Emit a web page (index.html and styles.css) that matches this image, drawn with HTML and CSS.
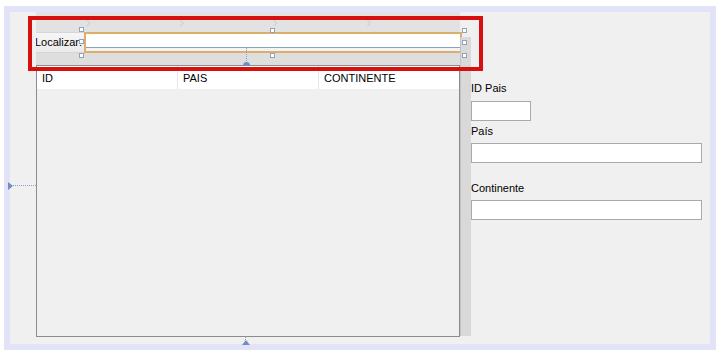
FILE: index.html
```html
<!DOCTYPE html>
<html lang="pt">
<head>
  <meta charset="UTF-8">
  <title>Países</title>
  <link rel="stylesheet" href="styles.css">
</head>
<body>
  <div class="frame">
    <div class="designer">
      <div class="panel">
        <div class="toolbar">
          <span class="chev">&#8250;</span>
          <span class="chev">&#8250;</span>
          <span class="chev">&#8250;</span>
          <span class="chev">&#8250;</span>
        </div>
        <div class="search-row">
          <span class="search-label"><span>Localizar:</span></span>
          <div class="search-field"><div class="search-input"></div></div>
        </div>
        <div class="toolbar-bottom"></div>
        <div class="table">
          <div class="thead">
            <div class="th">ID</div>
            <div class="th">PAIS</div>
            <div class="th">CONTINENTE</div>
          </div>
          <div class="tbody"></div>
        </div>
      </div>
      <div class="strip"></div>
      <div class="form">
        <div class="lbl lbl-id">ID Pais</div>
        <div class="field field-id"></div>
        <div class="lbl lbl-pais">País</div>
        <div class="field"></div>
        <div class="lbl lbl-cont">Continente</div>
        <div class="field"></div>
      </div>
    </div>

    <!-- seleção do designer -->
    <div class="selection"></div>
    <span class="handle" style="left:69px;top:15px"></span>
    <span class="handle" style="left:69px;top:27px"></span>
    <span class="handle" style="left:69px;top:41px"></span>
    <span class="handle" style="left:260px;top:16px"></span>
    <span class="handle" style="left:260px;top:41px"></span>
    <span class="handle" style="left:452px;top:16px"></span>
    <span class="handle" style="left:452px;top:28px"></span>
    <span class="handle" style="left:452px;top:41px"></span>
    <div class="anchor anchor-top"></div>
    <div class="anchor anchor-bottom"></div>
    <div class="anchor anchor-left"></div>
  </div>
</body>
</html>
```

FILE: styles.css
```css
/* base */
* { margin:0; padding:0; box-sizing:border-box; }
body { background:#fff; font-family:"Liberation Sans", Arial, sans-serif; font-size:11px; color:#000; }

/* moldura do form */
.frame {
  position:relative; margin:6px 0 0 4px; width:712px; height:344px;
  border:6px solid #e2e2f8; background:#f0f0f0;
}
.designer { display:flex; align-items:flex-start; }

/* painel com busca e tabela */
.panel { margin-left:26px; width:424px; }
.toolbar { height:20px; background:#e2e2e2; display:flex; align-items:center; padding-left:50px; }
.chev { width:105px; color:#cfcfcf; font-size:14px; line-height:20px; }
.search-row { display:flex; height:21px; background:#e2e2e2; }
.search-label {
  width:48px; height:21px; line-height:19px; flex:none; background:linear-gradient(#f6f6f6,#ebebeb);
  border-top:1px solid #d6d6d6; border-bottom:1px solid #d6d6d6;
  display:flex; justify-content:flex-end; padding-right:2px; overflow:hidden; white-space:nowrap;
}
.search-label span { flex:none; }
.search-field {
  width:378px; height:21px; flex:none;
  border:2px solid #dcae6c; background:#f3f3f3;
}
.search-input { height:14px; background:#fff; border-bottom:1px solid #8aa2bc; }
.toolbar-bottom { height:12px; background:#dedede; }

.table { height:272px; border:1px solid #8c8c8c; display:flex; flex-direction:column; }
.thead { display:flex; height:23px; background:#fff; }
.th { flex:1; padding-left:5px; line-height:24px; border-right:1px solid #e6e6e6; }
.th:last-child { border-right:none; }
.tbody { flex:1; background:#f0f0f0; }

.strip { margin-top:25px; width:11px; height:299px; background:#d9d9d9; border-left:1px solid #c4c4c4; }

/* campos à direita */
.form { width:231px; display:flex; flex-direction:column; }
.lbl { line-height:14px; height:14px; }
.lbl-id { margin-top:69px; }
.lbl-pais { margin-top:3px; }
.lbl-cont { margin-top:18px; }
.field { height:20px; background:#fff; border:1px solid #a9a9a9; margin-top:5px; }
.field-id { width:60px; margin-top:6px; }

/* sobreposições */
.selection { position:absolute; left:18px; top:4px; width:455px; height:55px; border:4px solid #d60f0f; }
.handle { position:absolute; width:5px; height:5px; background:#fff; border:1px solid #8ea4bd; }
.anchor { position:absolute; }
.anchor-top { left:236px; top:35px; width:1px; height:18px; border-left:1px dotted #8aa0c0; }
.anchor-top::after {
  content:""; position:absolute; left:-4px; bottom:-1px; width:7px; height:4px;
  background:#6f8fc2; border-radius:4px 4px 0 0;
}
.anchor-bottom { left:235px; top:324px; width:1px; height:6px; border-left:1px dotted #8aa0c0; }
.anchor-bottom::after {
  content:""; position:absolute; left:-4px; top:4px; width:0; height:0;
  border-left:4px solid transparent; border-right:4px solid transparent; border-bottom:5px solid #6f8fc2;
}
.anchor-left { left:-2px; top:173px; width:28px; height:1px; border-top:1px dotted #8aa0c0; }
.anchor-left::before {
  content:""; position:absolute; left:0; top:-4px; width:0; height:0;
  border-top:4px solid transparent; border-bottom:4px solid transparent; border-left:5px solid #6f8fc2;
}
```
